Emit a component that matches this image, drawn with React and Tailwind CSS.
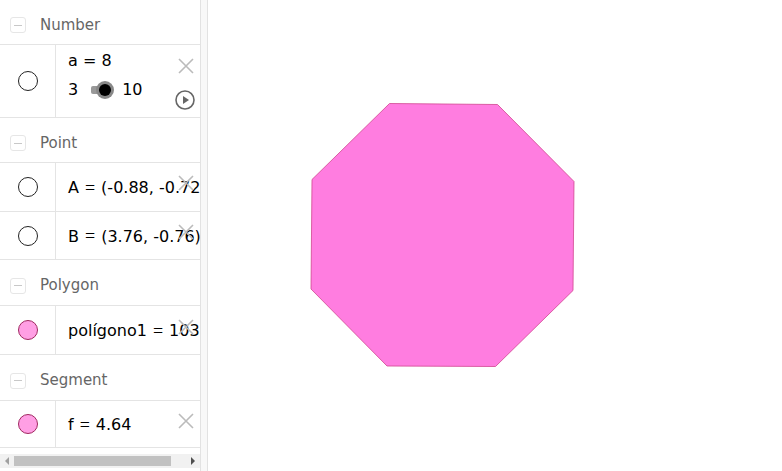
import React from "react";

const font = { fontFamily: '"DejaVu Sans", "Liberation Sans", sans-serif' };

const Header = ({ title, h }) => (
  <div className={`flex items-center pt-[6px] border-b border-[#e4e4e4] ${h}`}>
    <div className="ml-[10px] w-[16px] h-[16px] rounded-[3px] border border-[#e6e6e6] flex items-center justify-center">
      <div className="w-[8px] h-[1px] bg-[#c8c8c8]" />
    </div>
    <span className="ml-[14px] text-[15px] text-[#666]">{title}</span>
  </div>
);

const Marble = ({ pink }) => (
  <div
    className={
      pink
        ? "w-[20px] h-[20px] rounded-full bg-[#ff9fe4] border border-[#a02860]"
        : "w-[20px] h-[20px] rounded-full bg-white border border-[#222]"
    }
  />
);

const Cross = ({ className }) => (
  <svg width="18" height="18" viewBox="0 0 18 18" className={className}>
    <path d="M2 2 L16 16 M16 2 L2 16" stroke="#bbb" strokeWidth="1.6" />
  </svg>
);

const Eq = () => (
  <span
    className="inline-block mx-[6px] text-[18px]"
    style={{ fontFamily: '"Liberation Serif", serif' }}
  >
    =
  </span>
);

const Row = ({ h, pink, children, crossTop }) => (
  <div className={`flex border-b border-[#e4e4e4] relative ${h}`}>
    <div className="w-[56px] shrink-0 border-r border-[#e4e4e4] flex items-center justify-center">
      <Marble pink={pink} />
    </div>
    <div className="flex-1 flex items-center pl-[12px] pt-[2px] overflow-hidden whitespace-nowrap text-[16px] text-black">
      {children}
    </div>
    <Cross className={`absolute left-[177px] ${crossTop}`} />
  </div>
);

export default function App() {
  return (
    <div className="w-[782px] h-[471px] flex bg-white overflow-hidden" style={font}>
      <div className="w-[200px] shrink-0 flex flex-col">
        <Header title="Number" h="h-[45px]" />
        <div className="flex h-[73px] border-b border-[#e4e4e4] relative">
          <div className="w-[56px] shrink-0 border-r border-[#e4e4e4] flex items-center justify-center">
            <Marble />
          </div>
          <div className="flex-1 flex flex-col pl-[12px] pt-[4px] text-[16px] text-black">
            <div className="h-[24px] leading-[24px]">a = 8</div>
            <div className="flex items-center h-[34px]">
              <span>3</span>
              <div className="ml-[13px] w-[8px] h-[8px] bg-[#999] rounded-l-[2px]" />
              <div className="w-[18px] h-[18px] rounded-full bg-[#888] flex items-center justify-center -ml-[3px]">
                <div className="w-[12px] h-[12px] rounded-full bg-black" />
              </div>
              <span className="ml-[8px]">10</span>
            </div>
          </div>
          <Cross className="absolute left-[177px] top-[12px]" />
          <svg width="22" height="22" viewBox="0 0 22 22" className="absolute left-[174px] top-[44px]">
            <circle cx="11" cy="11" r="9" fill="none" stroke="#666" strokeWidth="1.6" />
            <path d="M9 7 L15 11 L9 15 Z" fill="#666" />
          </svg>
        </div>
        <Header title="Point" h="h-[45px]" />
        <Row h="h-[49px]" crossTop="top-[11px]">A<Eq />(-0.88, -0.72)</Row>
        <Row h="h-[48px]" crossTop="top-[11px]">B<Eq />(3.76, -0.76)</Row>
        <Header title="Polygon" h="h-[46px]" />
        <Row h="h-[49px]" pink crossTop="top-[12px]">polígono1<Eq />103.9</Row>
        <Header title="Segment" h="h-[46px]" />
        <Row h="h-[47px]" pink crossTop="top-[11px]">f<Eq />4.64</Row>
        <div className="mt-[6px] h-[14px] bg-[#f1f1f1] flex items-center">
          <svg width="14" height="14" viewBox="0 0 14 14">
            <path d="M9 3 L5 7 L9 11 Z" fill="#a0a0a0" />
          </svg>
          <div className="w-[157px] h-[10px] bg-[#c1c1c1]" />
          <div className="flex-1" />
          <svg width="14" height="14" viewBox="0 0 14 14">
            <path d="M5 3 L9 7 L5 11 Z" fill="#505050" />
          </svg>
        </div>
      </div>
      <div className="w-[8px] shrink-0 bg-[#f8f8f8] border-l border-r border-[#e2e2e2]" />
      <div className="flex-1 relative">
        <svg width="574" height="471" viewBox="208 0 574 471" className="absolute left-0 top-0">
          <polygon
            points="389.5,103.5 497.5,104.5 574,181.5 573,290.5 495.5,366.5 387,366 311,289 312,179.5"
            fill="#ff7de0"
            stroke="#d0458f"
            strokeWidth="0.8"
          />
        </svg>
      </div>
    </div>
  );
}
